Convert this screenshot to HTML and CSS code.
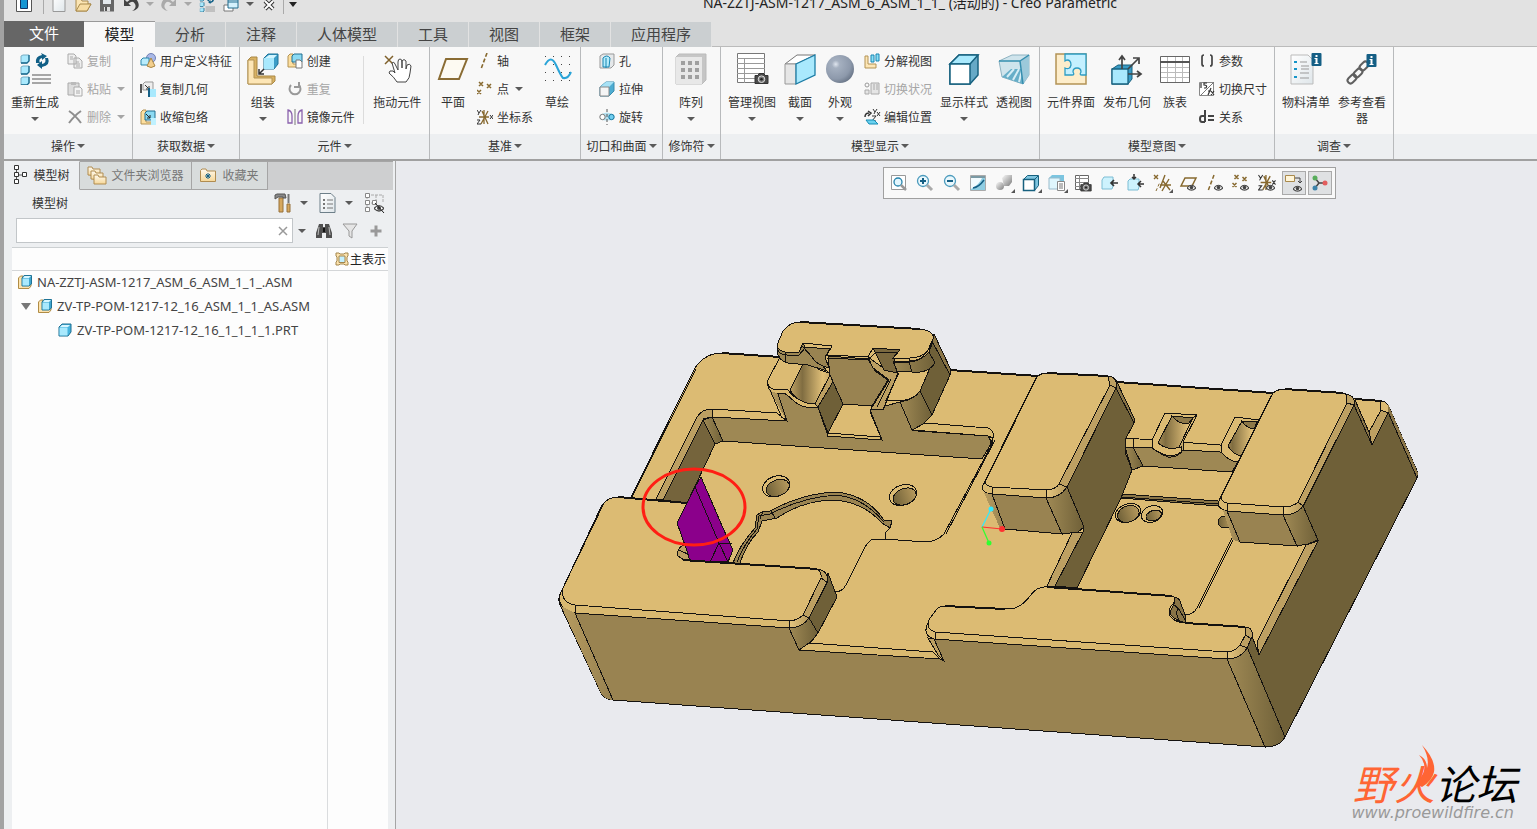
FILE: index.html
```html
<!DOCTYPE html>
<html lang="zh-CN">
<head>
<meta charset="utf-8">
<title>NA-ZZTJ-ASM-1217_ASM_6_ASM_1_1_ (活动的) - Creo Parametric</title>
<link rel="stylesheet" href="styles.css">
</head>
<body>
<svg class="defs" aria-hidden="true">
  <defs>
    <linearGradient id="page" x1="0" y1="0" x2="1" y2="1"><stop offset="0" stop-color="#fff"/><stop offset="1" stop-color="#dfe6ea"/></linearGradient>
    <linearGradient id="folder" x1="0" y1="0" x2="0" y2="1"><stop offset="0" stop-color="#fffaf0"/><stop offset="1" stop-color="#f6d797"/></linearGradient>
    <radialGradient id="ball" cx=".35" cy=".33" r=".7"><stop offset="0" stop-color="#dfe5ee"/><stop offset=".2" stop-color="#a5b0c0"/><stop offset=".75" stop-color="#8d99ab"/><stop offset="1" stop-color="#6e7a8c"/></radialGradient>
    <linearGradient id="gray" x1="0" y1="0" x2="1" y2="1"><stop offset="0" stop-color="#fafafa"/><stop offset="1" stop-color="#7c7c7c"/></linearGradient>
    <symbol id="asm" viewBox="0 0 16 16"><path d="M1.500 4l2-2H6v8h8v2l-2 2.500H1.500z" fill="#fde3ae" stroke="#b08c45"/><path d="M5 4l2-2.500h7.500V10L12 12H5z" fill="#3fa5cf" stroke="#1f7396"/><path d="M5.500 4.500H12v7H5.500z" fill="#a9e9fd"/><path d="M6 4l1.500-2H14l-2 2z" fill="#d7f6ff"/></symbol>
    <symbol id="prt" viewBox="0 0 16 16"><path d="M2 5l3-3h9v8l-3 4H2z" fill="#45b3dd" stroke="#1f6f91"/><path d="M2.500 5.500h8v8h-8z" fill="#a9e9fd"/><path d="M3 5l2-2h8l-2 2z" fill="#d7f6ff"/></symbol>
    <symbol id="eye" viewBox="0 0 10 7"><path d="M0 4q5-6 10 0q-5 5-10 0z" fill="#fff" stroke="#4a4a4a" stroke-width="1.200"/><circle cx="5" cy="3.600" r="2" fill="#444"/></symbol>
    <symbol id="camera" viewBox="0 0 15 12"><path d="M1 3h3l1-2h5l1 2h3v8H1z" fill="#4a4a4a" stroke="#333"/><circle cx="7.500" cy="6.700" r="3.300" fill="#777" stroke="#ddd"/><circle cx="7.500" cy="6.700" r="1.300" fill="#222"/></symbol>
    <symbol id="info" viewBox="0 0 10 13"><rect width="10" height="13" rx="1" fill="#155f85"/><path d="M4 2h2v2H4zM3 5h3v5h1v1H3v-1h1V6H3z" fill="#fff"/></symbol>
    <symbol id="triplet" viewBox="0 0 32 32"><g fill="#a9e9fd" stroke="#79aec4"><path d="M2 3l2-1h6v6l-2 2H2z"/><path d="M2 14l2-1h6v6l-2 2H2z"/><path d="M2 25l2-1h6v6l-2 2H2z"/></g><path d="M10 2v6l-2 2H2M10 13v6l-2 2H2M10 24v6l-2 2H2" fill="none" stroke="#186a8d" stroke-width="1.300"/><path d="M13 22h19M13 26h19M13 30h19" stroke="#8a8a8a" stroke-width="1.500"/><path d="M17 10q-1-7 6-8l-1-2l6 3l-5 4v-2q-4 1-2 5z" fill="#105f86"/><path d="M29 5q3 7-6 9v2l-5-4l5-4v3q5-1 3-6z" fill="#105f86"/></symbol>
    <symbol id="coords" viewBox="0 0 16 16"><path d="M2 8h10M5 2l6 13M11 2L4 15M7 1v14" stroke="#87692f" stroke-width="1.300"/><path d="M0 1l2 3l2-3M2 4l-1 2M0 11h3l-3 4h4M13 6l3 4M16 6l-3 4" fill="none" stroke="#333"/></symbol>
    <symbol id="axis" viewBox="0 0 16 16"><path d="M10 0L4 16" stroke="#87692f" stroke-width="1.600" stroke-dasharray="4 2"/></symbol>
    <symbol id="points" viewBox="0 0 16 16"><path d="M2 1l4 4M6 1L2 5M10 3l4 4M14 3l-4 4M0 9l4 4M4 9l-4 4" stroke="#87692f" stroke-width="1.500"/></symbol>
    <symbol id="puzzle" viewBox="0 0 32 32"><path d="M1 1h30v30H1z" fill="#fdedcb" stroke="#b39355" stroke-width="1.500"/><path d="M10 1h21v21h-4q-3 0-1-3q0-4-4-4t-4 4q2 3-1 3h-7v-7q5 2 6-3q0-5-4-5l-2 1z" fill="#c4f0ff" stroke="#2c9cc4" stroke-width="1.300"/></symbol>
    <symbol id="table" viewBox="0 0 32 32"><path d="M1.500 3.500h29v26h-29z" fill="#fff" stroke="#666"/><path d="M2 14.500h28M2 19.500h28M2 24.500h28M8.500 4v25M16.500 4v25M23.500 4v25" stroke="#bbb"/><path d="M1 9h30" stroke="#555" stroke-width="2"/></symbol>
  </defs>
</svg>

<div class="app">
<header class="titlebar">
  <nav class="quick" aria-label="快速访问工具栏">
    <button aria-label="窗口"><svg class="i16"><path d="M.5 0h15v15.500H.5z" fill="#fff" stroke="#555"/><path d="M4.500 2h7v10.500h-7z" fill="#1595d3" stroke="#136"/></svg></button>
    <i class="vr"></i>
    <button aria-label="新建" class="new"><svg class="i16"><path d="M2 0h12v15.500H2z" fill="url(#page)" stroke="#999"/></svg></button>
    <button aria-label="打开"><svg class="i16"><path d="M1 15V3h5l1 2h6v3h3l-4 7z" fill="#fbe5b4" stroke="#a98a4c"/><path d="M1 15L5 8h11l-4 7z" fill="#f7dda4" stroke="#a98a4c"/></svg></button>
    <button aria-label="保存"><svg class="i16"><path d="M1 0h14v15.500H1z" fill="#666"/><path d="M4 0h8v8H4z" fill="#e3e8ec"/><path d="M5 11h6v4.500H5z" fill="#ddd"/><path d="M6 11h2v4H6z" fill="#555"/></svg></button>
    <button aria-label="撤消"><svg class="i16"><path d="M1 3v7h7L5.500 7.500Q10 4 12 8t-3 7q9-2 6-9T4 6z" fill="#444"/></svg></button>
    <i class="caret pale"></i>
    <button aria-label="重做"><svg class="i16"><path d="M15 3v7H8l2.500-2.500Q6 4 4 8t3 7Q-2 13 1 6T12 6z" fill="#aaa"/></svg></button>
    <i class="caret pale"></i>
    <button aria-label="重新生成"><svg class="i16"><use href="#triplet"/></svg></button>
    <button aria-label="窗口列表"><svg class="i16"><path d="M1 9h9v6H1z" fill="#fff" stroke="#777"/><path d="M5 4h10v8H5z" fill="#d4f1fc" stroke="#226c8e"/><path d="M5 6h10" stroke="#226c8e"/></svg></button>
    <i class="caret"></i>
    <button aria-label="关闭"><svg class="i16"><path d="M4 5l8 8M12 5l-8 8" stroke="#333" stroke-width="4"/><path d="M4 5l8 8M12 5l-8 8" stroke="#fff" stroke-width="2"/></svg></button>
    <i class="vr end"></i>
    <i class="caret dark"></i>
  </nav>
  <h1>NA-ZZTJ-ASM-1217_ASM_6_ASM_1_1_ (活动的) - Creo Parametric</h1>
</header>

<nav class="tabs" aria-label="功能区">
  <button class="file">文件</button><button class="on">模型</button><button>分析</button><button>注释</button><button class="wide">人体模型</button><button>工具</button><button>视图</button><button>框架</button><button class="wide">应用程序</button>
  <i class="rule"></i>
</nav>

<section class="ribbon">
  <div class="group">
    <div class="body">
      <button class="big w62"><svg class="i32"><use href="#triplet"/></svg><span>重新生成</span><i class="caret"></i></button>
      <div class="col">
        <button class="small off"><svg class="i16"><path d="M1 1h6l2 2v8H1zM7 5h5l3 3v7H7z" fill="#eee" stroke="#aaa"/><path d="M3 4h3M3 6h3M9 9h3M9 11h4M9 13h4" stroke="#aaa"/></svg>复制</button>
        <button class="small off"><svg class="i16"><path d="M1 2h11v12H1z" fill="#ddd" stroke="#aaa"/><path d="M4 1h5v3H4z" fill="#bbb"/><path d="M7 6h6l2 2v7H7z" fill="#f5f5f5" stroke="#aaa"/><path d="M9 10h4M9 12h4" stroke="#aaa"/></svg>粘贴<i class="caret"></i></button>
        <button class="small off"><svg class="i16"><path d="M2 2q6 4 12 12M14 2Q8 6 2 14" fill="none" stroke="#8e8e8e" stroke-width="2"/></svg>删除<i class="caret"></i></button>
      </div>
    </div>
    <button class="foot">操作<i class="caret"></i></button>
  </div>
  <div class="group g2">
    <div class="body pad7">
      <div class="col">
        <button class="small"><svg class="i16"><circle cx="11" cy="5" r="4.500" fill="#a9b8e6" stroke="#7181b5"/><path d="M1 7l2-2h6v7H1z" fill="#b8ecfc" stroke="#2b86ab"/><path d="M11 5l4 8q-4 3-8 0z" fill="#f3cf8d" stroke="#a98745"/></svg>用户定义特征</button>
        <button class="small"><svg class="i16"><path d="M3 3l2-2h8v8H3z" fill="#eee" stroke="#999"/><path d="M1 3v9" stroke="#555" stroke-width="2"/><path d="M5 4l4 4M9 5v3H6" fill="none" stroke="#333"/><path d="M10 8h6v8h-6z" fill="#a9e9fd"/><path d="M9 7v9" stroke="#155f85" stroke-width="2"/></svg>复制几何</button>
        <button class="small"><svg class="i16"><path d="M1 3l2-2h3v12h9v2H1z" fill="#fddf9f" stroke="#b39355"/><path d="M5 4l2-2h8v9H5z" fill="#8bdaf3" stroke="#216f91"/><path d="M6 5l4 4M10 6v3H7" fill="none" stroke="#222"/><path d="M11 9h5v7h-5z" fill="#bff1ff"/></svg>收缩包络</button>
      </div>
    </div>
    <button class="foot">获取数据<i class="caret"></i></button>
  </div>
  <div class="group g3">
    <div class="body">
      <button class="big w46"><svg class="i32"><path d="M1 7l3-3h6v19h18v5l-3 3H1z" fill="#d9b263" stroke="#a98745"/><path d="M1 7h6v18h18v6H1z" fill="#fde6b6" stroke="#b39355"/><path d="M17 5l4-4h10v10l-4 5H17z" fill="#3c9dc7" stroke="#1d7297"/><path d="M17 5h10v11H17z" fill="#a9e9fd"/><path d="M18 5l4-3h8l-3 3z" fill="#d2f5ff"/><path d="M17 16l-5 5M12 16v5h5" fill="none" stroke="#333" stroke-width="1.500"/></svg><span>组装</span><i class="caret"></i></button>
      <div class="col line">
        <button class="small"><svg class="i16"><path d="M1 3l2-2h3v10h6v3H1z" fill="#fddf9f" stroke="#b39355"/><path d="M5 3l2-2h8v8H5z" fill="#8bdaf3" stroke="#216f91"/><path d="M9 7h4l2 2v6H9z" fill="#fff" stroke="#777"/></svg>创建</button>
        <button class="small off"><svg class="i16"><path d="M4 4a5.500 5.500 0 1 0 8 0M12 1v5h-5" fill="none" stroke="#999" stroke-width="2"/></svg>重复</button>
        <button class="small"><svg class="i16"><path d="M1 1q4 1 4 6v7H1zM15 1q-4 1-4 6v7h4z" fill="none" stroke="#8a62ad" stroke-width="1.300"/><path d="M8 0v16" stroke="#777"/></svg>镜像元件</button>
      </div>
      <button class="big w64"><svg class="i32"><path d="M4 3l8 8M12 3l-8 8" stroke="#7f602b" stroke-width="1.500"/><path d="M11 10q2-2 3 1l3 6V9q0-3 2-3t2 3v6V8q2-3 4 0v8l1-4q3-2 4 1l-1 7q0 5-4 9H16q-3-5-8-9q0-3 4-2l2 2z" fill="#fff" stroke="#444"/></svg><span>拖动元件</span></button>
    </div>
    <button class="foot">元件<i class="caret"></i></button>
  </div>
  <div class="group g4">
    <div class="body">
      <button class="big w46"><svg class="i32"><path d="M9 6h21l-8 20H2z" fill="#fdfaf2" stroke="#8a6c34" stroke-width="2"/></svg><span>平面</span></button>
      <div class="col w58">
        <button class="small"><svg class="i16"><use href="#axis"/></svg>轴</button>
        <button class="small"><svg class="i16"><use href="#points"/></svg>点<i class="caret"></i></button>
        <button class="small"><svg class="i16"><use href="#coords"/></svg>坐标系</button>
      </div>
      <button class="big w46"><svg class="i32"><path d="M4 3.500h26M4 11.500h26M4 19.500h26M4 27.500h26" stroke="#444" stroke-dasharray="1 7"/><path d="M4 12q6-11 11 0t7 13q5 1 8-6" fill="none" stroke="#2aa4d8" stroke-width="2"/></svg><span>草绘</span></button>
    </div>
    <button class="foot">基准<i class="caret"></i></button>
  </div>
  <div class="group g5">
    <div class="body pad18">
      <div class="col">
        <button class="small"><svg class="i16"><path d="M1 3l3-2h11v11l-3 3H1z" fill="#e5e8ea" stroke="#999"/><path d="M4 14V5q4-4 7 0l-1 9z" fill="#b5ecfb" stroke="#1685b2"/><path d="M7 5v10" stroke="#1685b2"/></svg>孔</button>
        <button class="small"><svg class="i16"><path d="M1 6l6-5h8v9l-5 5H1z" fill="#4eacd1" stroke="#3b8dae"/><path d="M1 6l6-5h8l-5 5z" fill="#a7e1f5"/><path d="M1 6h9v9H1z" fill="#f5f5f5" stroke="#888"/></svg>拉伸</button>
        <button class="small"><svg class="i16"><path d="M1 6q7-5 14 0v4q-7 3-14 0z" fill="#b5e0ef"/><circle cx="3.500" cy="8" r="2.700" fill="#fff" stroke="#777"/><circle cx="12.500" cy="8" r="2.700" fill="#70cef0" stroke="#16769d"/><path d="M8 0v16" stroke="#555" stroke-dasharray="3 2"/></svg>旋转</button>
      </div>
    </div>
    <button class="foot">切口和曲面<i class="caret"></i></button>
  </div>
  <div class="group g6">
    <div class="body">
      <button class="big w56"><svg class="i32"><path d="M1 4l3-3h27v26l-4 4H1z" fill="#c6c6c6" stroke="#bbb"/><path d="M1 4h26v27H1z" fill="#e8e8e8"/><path d="M6 10h18M6 17h18M6 24h18" stroke="#a0a0a0" stroke-width="4" stroke-dasharray="4 3"/></svg><span>阵列</span><i class="caret"></i></button>
    </div>
    <button class="foot">修饰符<i class="caret"></i></button>
  </div>
  <div class="group g7">
    <div class="body">
      <button class="big w62"><svg class="i32"><path d="M1.500.5h27v29h-27z" fill="#fff" stroke="#777"/><path d="M1 5.500h28M1 10.500h28M1 15.500h28M1 20.500h28M1 25.500h28M8.500 6v24" stroke="#999"/><use href="#camera" x="18" y="19" width="15" height="13"/></svg><span>管理视图</span><i class="caret"></i></button>
      <button class="big w34"><svg class="i32"><path d="M1 11l12-9h18L12 11z" fill="#fff" stroke="#777"/><path d="M1 11h11v20H1z" fill="#e6e6e6" stroke="#999"/><path d="M12 11l19-9v20l-19 9z" fill="#a9e9fd" stroke="#1d7da6" stroke-width="1.300"/></svg><span>截面</span><i class="caret"></i></button>
      <button class="big w46"><svg class="i32"><circle cx="16" cy="16" r="14" fill="url(#ball)"/></svg><span>外观</span><i class="caret"></i></button>
      <div class="col w73">
        <button class="small"><svg class="i16"><path d="M1 3h3v8h8v4H1z" fill="#fde6b6" stroke="#b39355"/><path d="M7 2h3v7H7zM12 1h3v7h-3z" fill="#8ae0f7" stroke="#1685b2"/></svg>分解视图</button>
        <button class="small off"><svg class="i16"><circle cx="3" cy="4" r="2" fill="none" stroke="#999"/><path d="M1 9h4v4H1zM7 2h8v11H7zM10 3v6M13 3v6" fill="#e5e5e5" stroke="#aaa"/></svg>切换状况</button>
        <button class="small"><svg class="i16"><path d="M1 8q0-4 4-4M4 2l3 2l-3 3" fill="none" stroke="#333" stroke-width="1.500"/><path d="M9 0l2 3l2-3M11 3l-1 2M8 7h4l-4 5h4M13 3l3 4M16 3l-3 4" fill="none" stroke="#333"/><path d="M2 11h8l4 4H5z" fill="#6bd2ef" stroke="#168cb5"/></svg>编辑位置</button>
      </div>
      <button class="big w56"><svg class="i32"><path d="M2 11l9-9h19v20l-8 9H2z" fill="#66a9c6" stroke="#17617f" stroke-width="1.500"/><path d="M2 11l9-9h19l-8 9z" fill="#a9e9fd" stroke="#17617f" stroke-width="1.500"/><path d="M2 11h20v20H2z" fill="#fff" stroke="#17617f" stroke-width="1.500"/></svg><span>显示样式</span><i class="caret"></i></button>
      <button class="big w44"><svg class="i32"><path d="M1 8l13-6h17v20l-6 9L4 24z" fill="#cfe4ec" stroke="#8eb3c2"/><path d="M4 24l9-8h15l-3 15z" fill="#66aec8"/><path d="M9 24l7-8M15 27l6-11M21 29l3-12" stroke="#d5edf5" stroke-width="2"/><path d="M22 8l9-6v20l-6 9z" fill="#9cc9da"/><path d="M1 8h21l3 23M22 8l9-6" fill="none" stroke="#368eaf" stroke-width="1.500"/></svg><span>透视图</span></button>
    </div>
    <button class="foot">模型显示<i class="caret"></i></button>
  </div>
  <div class="group g8">
    <div class="body">
      <button class="big w62"><svg class="i32"><use href="#puzzle"/></svg><span>元件界面</span></button>
      <button class="big w50"><svg class="i32"><path d="M1 16l6-4h14v14l-4 5H1z" fill="#399bc5" stroke="#17617f"/><path d="M1 16h16v15H1z" fill="#a9e9fd" stroke="#17617f" stroke-width="1.300"/><path d="M11 16V4M8 7l3-4l3 4M17 16L27 6M22 5h6v6M17 21h12M26 18l4 3l-4 3" fill="none" stroke="#444" stroke-width="1.700"/></svg><span>发布几何</span></button>
      <button class="big w46"><svg class="i32"><use href="#table"/></svg><span>族表</span></button>
      <div class="col">
        <button class="small"><svg class="i16"><path d="M5 2q-2 0-2 2v7q0 2 2 2M11 2q2 0 2 2v7q0 2-2 2" fill="none" stroke="#444" stroke-width="1.700"/></svg>参数</button>
        <button class="small"><svg class="i16"><path d="M.5 1.500h14v13H.5z" fill="#fff" stroke="#888"/><path d="M15 1L1 15" stroke="#777"/><path d="M2 2v5M8 2H5v2q4 0 2 3H5M9 14l3-7M9 10h3M12 10l3 4M15 10l-3 4" fill="none" stroke="#333" stroke-width="1.200"/></svg>切换尺寸</button>
        <button class="small"><svg class="i16"><path d="M6 1v12M6 7H3q-2 0-2 3t2 3h3M9 7h6M9 11h6" fill="none" stroke="#444" stroke-width="2"/></svg>关系</button>
      </div>
    </div>
    <button class="foot">模型意图<i class="caret"></i></button>
  </div>
  <div class="group g9">
    <div class="body">
      <button class="big w62"><svg class="i32"><path d="M1 2h17l5 5v24H1z" fill="url(#page)" stroke="#bbb"/><path d="M4 9h3M4 16h3M4 24h3" stroke="#1595c9" stroke-width="2"/><path d="M10 9h7M11 13h8M11 16h8M10 20h9M10 25h9" stroke="#999"/><use href="#info" x="21" y="0" width="11" height="13"/></svg><span>物料清单</span></button>
      <button class="big w50"><svg class="i32"><g fill="none" stroke="#606060" stroke-width="2"><rect x="-5" y="-3" width="10" height="6" rx="3" transform="translate(6 26)rotate(-45)"/><rect x="-5" y="-3" width="10" height="6" rx="3" transform="translate(12 20)rotate(-45)"/><rect x="-5" y="-3" width="10" height="6" rx="3" transform="translate(18 13)rotate(-45)"/></g><use href="#info" x="20" y="1" width="11" height="13"/></svg><span>参考查看器</span></button>
    </div>
    <button class="foot">调查<i class="caret"></i></button>
  </div>
  <div class="rest"><div class="body"></div><div class="foot"></div></div>
</section>

<main class="work">
  <aside class="side">
    <nav class="sidetabs" aria-label="导航器">
      <button class="on"><svg class="i16"><path d="M3.500 3v10M3.500 8h7" stroke="#555"/><path d="M1.500-1.500h4v4h-4zM1.500 5.500h4v4h-4zM1.500 12.500h4v4h-4zM9.500 5.500h4v4h-4z" fill="#fff" stroke="#333"/></svg>模型树</button>
      <button class="mid"><svg class="i20"><path d="M1 10V2h4l1 2h7v7z" fill="url(#folder)" stroke="#b08c50"/><path d="M4 14V6h4l1 2h7v7z" fill="url(#folder)" stroke="#b08c50"/><path d="M7 10h4l1 2h7v7H7z" fill="url(#folder)" stroke="#b08c50"/></svg>文件夹浏览器</button>
      <button class="fav"><svg class="i16"><path d="M.5 14.500v-11L2 2h4l1 2h8.500v10.500z" fill="url(#folder)" stroke="#b08c50"/><path d="M8 6v6M5 9h6M6 7l4 4M10 7l-4 4" stroke="#126086"/></svg>收藏夹</button>
      <i class="fill"></i>
    </nav>
    <div class="panel">
      <div class="treehead">
        <h2>模型树</h2>
        <button aria-label="设置" class="tool"><svg class="i20"><path d="M5 5h4v14H5z" fill="#d6a75d" stroke="#96703a"/><path d="M1 2l2-1h8l1 4H9V4H4L1 6z" fill="#888" stroke="#555"/><path d="M14.500 1v9" stroke="#777" stroke-width="2"/><path d="M13 11h3v8h-3z" fill="#d6a75d" stroke="#96703a"/></svg><i class="caret"></i></button>
        <button aria-label="显示" class="tool"><svg class="i20"><path d="M1 .5h11l4 4v15H1z" fill="url(#page)" stroke="#6d7f89"/><path d="M8 7h6M8 11h6M8 15h6" stroke="#777"/><path d="M5 6v11" stroke="#777" stroke-width="2" stroke-dasharray="2 2"/></svg><i class="caret"></i></button>
        <button aria-label="层树"><svg class="i20"><path d="M3 3v14M3 10h8M7 2h12v8M12 2v8" fill="none" stroke="#aaa" stroke-dasharray="3 1"/><path d="M1.500.5h4v4h-4zM1.500 7.500h4v4h-4zM1.500 14.500h4v4h-4zM8.500 7.500h4v4h-4z" fill="#fff" stroke="#888"/><use href="#eye" x="10" y="11" width="10" height="8"/><path d="M11 10l9 10" stroke="#222"/></svg></button>
      </div>
      <div class="search">
        <div class="box"><input type="text" aria-label="搜索模型树"><button aria-label="清除"><svg class="i10"><path d="M1 1l8 8M9 1L1 9" stroke="#999" stroke-width="1.500"/></svg></button></div>
        <i class="caret"></i>
        <button aria-label="查找"><svg class="i16"><path d="M3 1h4v3h2V1h4l3 9v5h-6v-5H6v5H0v-5z" fill="#505050"/><path d="M3 4L2 12M13 4l1 8" stroke="#bbb"/><path d="M7 5h2v4H7z" fill="#111"/></svg></button>
        <button aria-label="过滤"><svg class="i16"><path d="M1 1h14L10 8v7l-3-2V8z" fill="#e5e5e5" stroke="#999"/></svg></button>
        <button aria-label="添加"><svg class="i16"><path d="M8 2.500v11M2.500 8h11" stroke="#999" stroke-width="3"/></svg></button>
      </div>
      <div class="tree">
        <div class="names">
          <div class="colhead"></div>
          <ul>
            <li><svg class="i16"><use href="#asm"/></svg>NA-ZZTJ-ASM-1217_ASM_6_ASM_1_1_.ASM</li>
            <li><button aria-label="折叠" class="twist"></button><svg class="i16"><use href="#asm"/></svg>ZV-TP-POM-1217-12_16_ASM_1_1_AS.ASM</li>
            <li class="deep"><svg class="i16"><use href="#prt"/></svg>ZV-TP-POM-1217-12_16_1_1_1_1.PRT</li>
          </ul>
        </div>
        <div class="rep"><div class="colhead"><svg class="i14"><path d="M1 1h3l1 1h4l1-1h3v3l-1 1v4l1 1v3h-3l-1-1H5l-1 1H1v-3l1-1V5L1 4z" fill="#fde3ae" stroke="#a3864d"/><path d="M4 4h6v6.500H4z" fill="#c4f0ff" stroke="#a3864d"/></svg>主表示</div></div>
      </div>
    </div>
  </aside>

  <section class="canvas">
    <svg class="model" viewBox="396 161 1141 668" role="img" aria-label="三维模型">
      <defs>
        <linearGradient id="cr"><stop offset="0" stop-color="#a08a55"/><stop offset="1" stop-color="#6f6038"/></linearGradient>
        <linearGradient id="cl"><stop offset="0" stop-color="#b79c60"/><stop offset="1" stop-color="#978150"/></linearGradient>
        <linearGradient id="gv"><stop offset="0" stop-color="#c0a263"/><stop offset=".3" stop-color="#806d41"/><stop offset=".8" stop-color="#e0bf78"/><stop offset="1" stop-color="#c5a666"/></linearGradient>
        <linearGradient id="bc"><stop offset="0" stop-color="#e6c781"/><stop offset="1" stop-color="#b6995c"/></linearGradient>
        <linearGradient id="hole"><stop offset="0" stop-color="#6f6038"/><stop offset="1" stop-color="#b79a5d"/></linearGradient>
      </defs>
      <g class="edges">
        <path class="top" d="M631 497L695 368Q705 353 722 353L780 357L950 370L1038 376L1117 382L1273 393L1355 399L1382 401Q1387 402 1389 407L1418 473L1417 478L1285 737Q1280 747 1265 747L613 700Q604 699 601 693L560 605Q557 597 562 590L602 505Q608 497 618 497z"/>
        <path class="ln" d="M632 497L696 369M562 590L604 503"/>
        <!-- left pocket -->
        <path class="mid" d="M656 499L697 417Q702 409 712 409L777 413L787 421L712 417L703 420L663 500z"/>
        <path class="wall" d="M703 419L712 417L787 421L770 388L818 407L828 436L882 440L870 410L900 402L912 430L918 431L988 436L992 442L982 459L723 441L715 444z"/>
        <path fill="url(#cr)" d="M703 420L712 417L723 441L715 444z"/>
        <path fill="#75643c" d="M663 500L703 420L715 444L687 503z"/>
        <path class="lite" d="M925 423L988 428Q995 431 993 438L988 436L912 430z"/>
        <path class="top" d="M712 409L777 413L787 421L712 417z"/>
        <path class="ln" d="M993 438L992 444L944 534Q936 542 925 542L885 539H873Q868 541 864 549L846 585Q842 592 835 592M995 440L946 534M989 436L991 444M885 539L885 533L891 527"/>
        <path fill="#9b8451" d="M733 563Q739 546 755 528L757 515Q761 511 770 511Q803 493 837 492Q868 496 884 520L892 521L890 528L882 523Q861 500 830 500Q800 502 777 518L762 521L758 532Q746 544 740 563z"/>
        <path class="ln" d="M737 562Q744 544 757 529L759 516L770 514Q803 497 837 495Q864 498 884 522M763 511L760 519M771 511L775 518"/>
        <g transform="rotate(-20 777 486)"><ellipse class="top" cx="776" cy="486" rx="14" ry="10"/><ellipse fill="url(#hole)" cx="777" cy="488" rx="12" ry="8"/></g>
        <g transform="rotate(-20 903 495)"><ellipse class="top" cx="903" cy="495" rx="14" ry="10"/><ellipse fill="url(#hole)" cx="904" cy="497" rx="12" ry="8"/></g>
        <!-- raised clamp -->
        <path class="top" d="M780 357L768 380Q766 386 773 390L788 390L797 397Q806 406 818 407L832 375L843 404L872 406L870 410L883 409L887 400H905Q916 398 921 390L935 360L932 334L800 330z"/>
        <path class="lite" d="M768 381Q767 387 773 389L788 390Q798 404 818 403L818 407Q803 409 795 402L786 394L773 393Q766 388 768 381z"/>
        <path fill="url(#cl)" d="M769 390L778 394L787 421z" stroke="none"/>
        <path class="ln" d="M778 394L787 421M770 390L782 418"/>
        <path fill="url(#gv)" d="M804 362L790 390Q798 404 816 404L831 373Q815 371 813 361z"/>
        <path class="mid" d="M831 373L815 404L818 407L835 381z"/>
        <path fill="#6f6038" d="M834 380L843 404L828 433L818 407z"/>
        <path fill="#998351" d="M828 356L868 359L875 371L888 380L872 406L843 404L830 375z"/>
        <path class="top" d="M843 404L872 406L870 412L882 440L827 436L828 433z"/>
        <path class="lite" d="M828 433L880 437L882 440L827 436z"/>
        <path class="mid" d="M868 357L873 368L889 380L871 409L883 410L887 400L898 373L886 370z"/>
        <path class="ln" d="M891 379L877 407M899 373L886 400H903M900 402L912 430"/>
        <path fill="#7b693f" d="M873 348L900 350L894 360L897 373L884 370L876 354z"/>
        <path fill="url(#cr)" d="M900 402Q914 400 920 391L932 415L923 424L912 430z"/>
        <path fill="#6f6038" d="M933 341L950 375L932 415L920 391L930 368L935 363L929 352z"/>
        <path fill="#8a7547" d="M934 334L951 370L950 375L932 341z"/>
        <path fill="url(#cr)" d="M893 361H909Q922 361 929 352L935 363Q928 374 912 372L897 371z"/>
        <path class="wall" d="M777 346L785 352H799L803 343L806 349L818 360L827 371L808 365L788 363Q779 361 777 352z"/>
        <path fill="#998351" d="M803 347L830 349L825 357L829 368Q816 365 812 357z"/>
        <path class="top" d="M777 345L783 331Q790 322 800 322L920 329Q935 331 933 339L928 350Q922 358 910 358H893L900 350L873 348L868 357L827 355L832 346L803 343L799 352H785Q777 350 777 345z"/>
        <path class="ln" d="M777 347Q778 355 787 355L798 356L806 347M785 352V362M827 358L868 360L876 352L897 353M893 362H910Q924 361 932 343M909 358V362L912 372"/>
        <!-- purple insert -->
        <path class="mid" d="M688 543Q676 547 678 556L684 560L692 561z"/><path class="ln" d="M679 550L692 556"/>
        <path fill="#8b008b" d="M701 477L723 528L733 550L728 562L690 561L686 548L677 523L695 487z"/>
        <path class="ln" d="M695 487L719 543L728 562M732 543H719L710 562"/>
        <!-- lower left block -->
        <path class="ln heavy" d="M618 497L687 503M683 560L817 569"/>
        <path class="lite" d="M562 590Q562 603 575 605L790 621L789 628L575 613Q559 609 559 597z"/>
        <path fill="url(#bc)" d="M790 621Q798 620 803 615L809 618Q801 629 789 628z"/>
        <path class="mid" d="M803 615L821 578Q822 572 817 569Q827 570 828 580L809 618z"/>
        <path fill="#6f6038" d="M828 573L837 597L818 633L809 618L827 583z"/>
        <path class="ln" d="M821 578L828 583"/>
        <path fill="url(#cr)" d="M789 628Q802 628 809 618L818 633Q808 647 799 650z"/>
        <path class="lite" d="M809 643L933 652L940 659L799 650z"/>
        <path fill="#998351" d="M575 613L789 628L799 650L940 659L944 661L934 639L1227 659L1265 747L613 700z"/>
        <path fill="url(#cl)" d="M561 606L575 613L613 700Q604 699 601 693z" stroke="none"/>
        <path class="ln" d="M575 605V613L613 700"/>
        <!-- right face -->
        <path fill="#6f6038" d="M1247 647L1252 636L1259 655L1318 541L1303 507L1354 405L1372 445L1388 412L1417 478L1285 737z"/>
        <path fill="#8a7547" d="M1388 404L1418 473L1417 478L1388 412z" stroke="none"/>
        <path class="mid" d="M1381 410L1388 413L1372 445L1369 432z"/><path fill="#8a7547" d="M1355 400L1369 432L1372 445L1354 405z"/>
        <path class="ln" d="M1381 410L1380 401M1388 412L1417 478"/>
        <path class="mid" d="M1257 642L1306 545L1318 541L1259 655z"/>
        <path fill="url(#cr)" d="M1227 659Q1241 658 1247 647L1285 737Q1280 747 1265 747z"/>
        <!-- right pocket -->
        <path class="lite" d="M1126 438L1220 445L1238 462L1133 451L1125 447z"/>
        <path class="wall" d="M1125 447H1133L1152 448L1163 455H1178L1183 450L1220 452L1238 462L1232 472L1143 466Q1135 466 1132 470L1125 452z"/>
        <path fill="url(#cr)" d="M1125 447L1133 447L1143 466L1132 470z"/>
        <path fill="url(#gv)" d="M1165 413L1197 415L1183 442V450Q1178 458 1168 457L1152 448V440z"/>
        <path class="top" d="M1165 413L1197 415L1193 418L1172 416L1158 443Q1167 451 1181 447V452Q1170 461 1152 448V440z"/>
        <path fill="#8d7849" d="M1172 416L1193 418L1188 424Q1178 424 1172 416z"/>
        <path class="ln" d="M1193 418L1179 447M1133 439V447M1183 443V450"/>
        <path fill="url(#gv)" d="M1235 417L1259 420L1238 462Q1228 461 1221 452V445z"/>
        <path class="top" d="M1235 417L1259 420L1257 422L1242 421L1228 446Q1232 454 1241 456L1238 462Q1228 461 1221 452V445z"/>
        <path fill="#8d7849" d="M1242 421L1257 422L1254 429Q1246 428 1242 421z"/>
        <path fill="#8a7547" d="M1122 494L1218 501V506L1121 498z"/><path class="ln" d="M1121 497L1218 504M1132 470L1121 497"/>
        <path class="ln" d="M1232 538L1197 608Q1193 615 1185 615M1234 538L1199 608"/>
        <g transform="rotate(-20 1128 513)"><ellipse class="top" cx="1128" cy="513" rx="13" ry="9"/><ellipse fill="url(#hole)" cx="1128" cy="514" rx="11" ry="8"/></g>
        <g transform="rotate(-20 1152 514)"><ellipse class="top" cx="1152" cy="514" rx="11" ry="8"/><ellipse fill="url(#hole)" cx="1153" cy="516" rx="8" ry="5"/></g>
        <ellipse fill="url(#hole)" cx="1225" cy="522" rx="7" ry="6"/>
        <!-- middle block -->
        <path fill="#6f6038" d="M1067 487L1116 388L1134 423L1125 440V452L1132 470L1121 498L1077 588L1055 586L1083 532L1084 527z"/>
        <path fill="#8a7547" d="M1116 380L1135 420L1134 423L1116 388z"/>
        <path class="mid" d="M1072 533L1083 532L1055 586L1047 586z"/>
        <path class="top" d="M985 482L1037 377Q1041 373 1047 373L1108 376Q1116 378 1110 385L1059 484Q1055 490 1047 490L992 487Q986 486 985 482z"/>
        <path class="lite" d="M985 482Q986 486 992 487L1047 490L1046 498L992 494Q982 493 982 487z"/>
        <path fill="url(#bc)" d="M1047 490Q1056 489 1059 484L1067 487Q1060 498 1046 498z"/>
        <path class="mid" d="M1059 484L1110 385L1108 376Q1118 377 1116 388L1067 487z"/><path class="ln" d="M1110 385L1116 388M982 487L1036 378M992 487V494"/>
        <path fill="url(#cl)" d="M984 493L992 494L1005 529L1000 528z" stroke="none"/>
        <path fill="#998351" d="M992 494L1046 498L1062 534L1005 529z"/>
        <path fill="url(#cr)" d="M1046 498Q1060 498 1067 487L1084 527L1078 532L1062 534z"/>
        <!-- right block -->
        <path class="top" d="M1221 496L1273 393Q1278 389 1285 389L1343 393Q1350 396 1347 403L1298 502Q1293 507 1283 507L1227 503Q1221 502 1221 496z"/>
        <path class="lite" d="M1221 496Q1221 502 1227 503L1283 507V515L1227 511Q1218 509 1218 503z"/>
        <path fill="url(#bc)" d="M1283 507Q1293 507 1298 502L1303 506Q1297 516 1283 515z"/>
        <path class="mid" d="M1298 502L1347 403L1346 394Q1356 396 1354 405L1303 506z"/><path class="ln" d="M1347 403L1354 405M1218 503L1271 396M1227 503V511"/>
        <path fill="url(#cl)" d="M1223 510L1227 511L1240 542L1233 540z" stroke="none"/>
        <path fill="#998351" d="M1227 511L1283 515L1297 546L1240 542z"/>
        <path fill="url(#cr)" d="M1283 515Q1297 515 1303 506L1318 540L1308 544L1297 546z"/>
        <!-- lower right block -->
        <path class="top" d="M935 632Q924 628 930 618L937 609Q940 606 945 606L1010 609Q1021 608 1030 596Q1037 586 1047 587L1172 596Q1178 598 1173 604Q1167 610 1170 616Q1174 622 1185 623L1245 627Q1250 631 1245 636L1240 646Q1236 651 1227 652z"/>
        <path class="lite" d="M929 621Q926 629 935 632L1227 652V659L934 639Q921 635 929 621z"/>
        <path fill="url(#bc)" d="M1227 652Q1236 651 1240 645L1247 648Q1241 659 1227 659z"/>
        <path class="mid" d="M1245 627Q1254 628 1252 637L1247 648L1240 645L1246 634z"/><path class="ln" d="M1245 635L1252 639"/>
        <path fill="#8a7547" d="M1174 597Q1180 598 1181 604L1186 617L1185 623Q1170 618 1170 612L1174 604z"/><path class="ln" d="M1174 605L1178 608L1186 621M1178 608Q1175 614 1180 622"/>
        <path class="mid" d="M928 638L934 639L944 661L938 655z"/>
        <path class="ln heavy" d="M945 606L1005 609M1047 587L1172 596M1185 623L1245 627M1047 373L1108 376M1285 389L1343 393M800 322L920 329M722 353L780 357M950 370L1038 376M1117 382L1273 393M1355 399L1382 401"/>
        <path class="ln" d="M935 632V639"/>
      </g>
      <ellipse cx="694" cy="507" rx="51" ry="38" fill="none" stroke="#ff1e14" stroke-width="3"/>
      <g stroke-width="1.200"><path d="M982 527L991 509" stroke="#30eaff"/><path d="M982 527L1002 529" stroke="#ff3030"/><path d="M982 527L989 543" stroke="#30ff30"/></g>
      <circle cx="991" cy="509" r="2.500" fill="#30eaff"/><circle cx="1002" cy="529" r="3" fill="#ff3030"/><circle cx="989" cy="543" r="2.500" fill="#30ff30"/>
    </svg>

    <div class="viewbar" role="toolbar" aria-label="视图">
      <button aria-label="重新调整"><svg class="i18"><path d="M1.500 1.500h14v14h-14z" fill="#fff" stroke="#999"/><circle cx="8" cy="8" r="4" fill="#e4f6fd" stroke="#2683ab" stroke-width="1.300"/><path d="M11 11l5 5" stroke="#999" stroke-width="2.500"/></svg></button>
      <button aria-label="放大"><svg class="i18"><circle cx="7" cy="7" r="5.500" fill="#eaf8fd" stroke="#4c9bbd" stroke-width="1.300"/><path d="M4 7h6M7 4v6" stroke="#155f85" stroke-width="2"/><path d="M11 11l5 5" stroke="#aaa" stroke-width="3"/></svg></button>
      <button aria-label="缩小"><svg class="i18"><circle cx="7" cy="7" r="5.500" fill="#eaf8fd" stroke="#4c9bbd" stroke-width="1.300"/><path d="M4 7h6" stroke="#155f85" stroke-width="2"/><path d="M11 11l5 5" stroke="#aaa" stroke-width="3"/></svg></button>
      <button aria-label="重画"><svg class="i18"><path d="M1.500 1.500h15v15h-15z" fill="#8fcde2" stroke="#aaa"/><path d="M2 4h11Q10 11 2 15z" fill="#f3fbfe"/><path d="M2 3h14" stroke="#666" stroke-width="1"/><path d="M4 14q6-1 11-8" fill="none" stroke="#155f85" stroke-width="1.500"/></svg></button>
      <button aria-label="着色" class="more"><svg class="i18"><circle cx="5" cy="12" r="4" fill="url(#gray)"/><path d="M7 4l3-3h7v7l-3 4H9z" fill="url(#gray)"/></svg></button>
      <button aria-label="显示样式" class="more"><svg class="i18"><path d="M1.500 5.500l4-4h11v10l-4 5h-11z" fill="#7fc5df" stroke="#17617f"/><path d="M1.500 5.500h11v11h-11z" fill="#fff" stroke="#17617f" stroke-width="1.500"/><path d="M12 6l4-4" stroke="#17617f"/></svg></button>
      <button aria-label="已保存方向" class="more"><svg class="i18"><path d="M1 4l3-3h12v11H1z" fill="#7cc5e0"/><path d="M1 4h11v11H1z" fill="#dff6fd" stroke="#9bc"/><path d="M9.500 7.500h7v9h-7z" fill="#fff" stroke="#888"/><path d="M11 10h4M11 12h4M11 14h4" stroke="#777"/></svg></button>
      <button aria-label="视图管理器"><svg class="i18"><path d="M1.500 1.500h13v14h-13z" fill="#fff" stroke="#666"/><path d="M1 4.500h14M1 8.500h14M1 12.500h14M5.500 1v14" stroke="#888"/><use href="#camera" x="6" y="8" width="12" height="10"/></svg></button>
      <button aria-label="激活"><svg class="i18"><path d="M1 6l2-3h9v9l-1 3H1z" fill="#cdf2fd" stroke="#7dbdd4"/><path d="M17 9h-6M13 6l-3 3l3 3" fill="none" stroke="#333" stroke-width="1.700"/></svg></button>
      <button aria-label="拖动"><svg class="i18"><path d="M1 7l2-2h9v8l-1 3H1z" fill="#cdf2fd" stroke="#7dbdd4"/><path d="M17 10h-6M14 7l-3 3l3 3M7 0v5M5 3l2 2l2-2" fill="none" stroke="#333" stroke-width="1.500"/></svg></button>
      <button aria-label="基准过滤" class="more"><svg class="i18"><path d="M1 1l4 4M5 1L1 5M7 14L12 1M7 11h11M9 17l7-12M10 7l7 9" stroke="#87692f" stroke-width="1.400"/><path d="M3 17l4-9" stroke="#87692f" stroke-dasharray="3 2"/></svg></button>
      <button aria-label="平面显示"><svg class="i18"><path d="M6 4h11l-4 8H2z" fill="none" stroke="#87692f" stroke-width="1.500"/><use href="#eye" x="8" y="10" width="9" height="7"/></svg></button>
      <button aria-label="轴显示"><svg class="i18"><path d="M8 1L2 17" stroke="#87692f" stroke-width="1.500" stroke-dasharray="4 2"/><use href="#eye" x="8" y="10" width="9" height="7"/></svg></button>
      <button aria-label="点显示"><svg class="i18"><use href="#points" width="17" height="16"/><use href="#eye" x="8" y="10" width="9" height="7"/></svg></button>
      <button aria-label="坐标系显示"><svg class="i18"><use href="#coords" width="18" height="17"/><use href="#eye" x="8" y="10" width="9" height="7"/></svg></button>
      <button aria-label="注释显示" class="down"><svg class="i18"><path d="M.5 1.500h9v6h-9z" fill="#fff5d8" stroke="#a98a4c"/><path d="M10 4h5v5M13 7l2 2l2-2" fill="none" stroke="#444"/><use href="#eye" x="8" y="11" width="9" height="7"/></svg></button>
      <button aria-label="旋转中心" class="down"><svg class="i18"><path d="M4 4l4 5h6M8 9l-4 5" fill="none" stroke="#444" stroke-width="1.500"/><circle cx="4" cy="4" r="2.500" fill="#58ad5b"/><circle cx="14" cy="9" r="2.500" fill="#e35e5e"/><circle cx="4" cy="14" r="2.500" fill="#3d83aa"/></svg></button>
    </div>

    <div class="brand">
      <svg class="flame" viewBox="0 0 18 42"><path d="M5 0Q19 15 17 27Q15 36 5 42Q0 40 1 35Q9 28 7 19Q6 14 2 10Q10 14 10 23Q13 13 5 0z" fill="#ff6534"/></svg>
      <div class="logo"><span>野火</span>论坛</div>
      <a href="#">www.proewildfire.cn</a>
    </div>
  </section>
</main>
</div>
</body>
</html>
```
FILE: styles.css
```css
* { box-sizing: border-box; }
body { margin: 0; background: #e2e2e2; color: #333; font: 12px/16px "Noto Sans CJK SC", sans-serif; overflow: hidden; }
button { border: 0; padding: 0; background: none; font: inherit; color: inherit; white-space: nowrap; }
h1, h2, ul { margin: 0; padding: 0; font-weight: 400; list-style: none; }
svg { flex: none; overflow: visible; display: block; }
.defs { position: absolute; width: 0; height: 0; }
.i10 { width: 10px; height: 10px; }
.i14 { width: 14px; height: 14px; }
.i16 { width: 16px; height: 16px; }
.i18 { width: 18px; height: 18px; }
.i20 { width: 20px; height: 20px; }
.i32 { width: 32px; height: 32px; }
.caret { flex: none; width: 8px; border: 4px solid transparent; border-top-color: #5a5a5a; border-bottom: 0; }
.pale { border-top-color: #a8a8a8; }
.dark { border-top-color: #222; border-top-width: 5px; }

.app { height: 100vh; display: flex; flex-direction: column; border-left: 4px solid #a2a2a2; }

.titlebar { height: 21px; display: flex; flex: none; overflow: hidden; }
.quick { display: flex; align-items: center; gap: 8px; height: 16px; margin-top: -4px; padding-left: 12px; }
.quick .caret { margin: 0 -1px; }
.quick .vr { width: 1px; height: 20px; margin: 0 3px; background: #aaa; }
.quick .end { margin: 0 -2px; }
.quick .new { margin-left: -4px; }
.titlebar h1 { flex: 1; margin-top: -7px; padding-right: 13px; text-align: center; font: 14px/20px "Noto Sans", "Noto Sans CJK SC", sans-serif; color: #222; }

.tabs { display: flex; flex: none; height: 26px; align-items: stretch; gap: 1px; font-size: 15px; line-height: 24px; }
.tabs button { width: 70px; margin-top: 1px; padding-bottom: 2px; background: #cbcfd1; color: #444; }
.tabs .wide { width: 100px; }
.tabs .file { width: 80px; margin: 0 -1px 0 0; background: #666; color: #fff; }
.tabs .on { width: 71px; margin: 0 -1px 0 0; background: #f8f8f8; border-top: 1px solid #999; color: #222; }
.tabs .rule { flex: 1; border-bottom: 1px solid #bbb; }

.ribbon { display: flex; flex: none; border-bottom: 2px solid #a0a0a0; background: #f8f8f8; }
.group { display: flex; flex-direction: column; width: 129px; border-right: 1px solid #b8babc; }
.g2 { width: 107px; } .g3 { width: 190px; } .g4 { width: 151px; } .g5 { width: 82px; } .g6 { width: 58px; } .g7 { width: 319px; } .g8 { width: 235px; } .g9 { width: 119px; }
.rest { flex: 1; }
.body { display: flex; height: 87px; }
.pad7 { padding-left: 6px; }
.pad18 { padding-left: 17px; }
.foot { display: flex; align-items: center; justify-content: center; gap: 2px; height: 25px; padding-bottom: 2px; background: #edeff1; }
.big { display: flex; flex-direction: column; align-items: center; padding-top: 6px; }
.big span { margin-top: 9px; white-space: normal; max-width: 48px; }
.big .caret { margin-top: 7px; }
.w34 { width: 34px; } .w44 { width: 44px; } .w46 { width: 46px; } .w50 { width: 50px; } .w56 { width: 56px; } .w62 { width: 62px; } .w64 { width: 64px; }
.col { display: grid; grid-template-rows: repeat(3, 28px); padding-left: 1px; }
.col.w58 { width: 58px; }
.col.w73 { width: 73px; }
.col.line { width: 79px; margin-right: 1px; background: linear-gradient(#dcdcdc, #dcdcdc) right 9px / 1px 68px no-repeat; }
.small { display: flex; align-items: center; gap: 4px; }
.small .caret { margin-left: 2px; }
.off { color: #a6a6a6; }
.off .caret { border-top-color: #a6a6a6; }

.work { flex: 1; display: flex; min-height: 0; }
.side { width: 392px; flex: none; display: flex; flex-direction: column; border-right: 1px solid #a5a5a5; background: #edeff1; }
.sidetabs { display: flex; height: 29px; flex: none; padding-right: 2px; }
.sidetabs button { display: flex; align-items: center; justify-content: center; gap: 4px; padding-bottom: 2px; border: 1px solid #a5a5a5; border-left: 0; background: #d8dcdc; color: #777; }
.sidetabs .on { width: 76px; border-color: transparent #a5a5a5 transparent transparent; background: #edeff1; color: #333; }
.sidetabs .mid { width: 112px; }
.sidetabs .fav { width: 76px; gap: 6px; }
.sidetabs .fill { flex: 1; background: #cecfd0; border-top: 1px solid #a5a5a5; }
.panel { flex: 1; display: flex; flex-direction: column; padding: 0 7px 0 8px; }
.treehead { height: 28px; display: flex; align-items: center; gap: 11px; padding: 0 4px 2px 20px; }
.treehead h2 { flex: 1; font-size: 12px; }
.tool { display: flex; align-items: center; gap: 6px; }
.search { height: 25px; display: flex; align-items: center; gap: 10px; padding: 0 4px; }
.box { flex: 1; height: 25px; display: flex; align-items: center; padding-right: 4px; border: 1px solid #c2c6c9; background: #fff; margin-right: -5px; }
.box input { flex: 1; min-width: 0; border: 0; outline: 0; background: none; font: inherit; }
.tree { flex: 1; display: grid; grid-template-columns: 1fr 61px; margin-top: 4px; border-top: 1px solid #ccd0d2; background: #fdfdfd; }
.rep { border-left: 1px solid #dadcde; }
.colhead { height: 23px; display: flex; align-items: center; gap: 1px; padding-left: 7px; border-bottom: 1px solid #d4d6d8; white-space: nowrap; color: #222; }
.tree li { height: 24px; display: flex; align-items: center; gap: 4px; padding: 0 0 2px 5px; white-space: nowrap; font: 13px/22px "Noto Sans", "Noto Sans CJK SC", sans-serif; color: #444; }
.tree .deep { padding-left: 45px; }
.twist { width: 10px; margin: 0 2px 0 4px; border: 5px solid transparent; border-top: 7px solid #777; border-bottom: 0; }

.canvas { flex: 1; position: relative; overflow: hidden; background: #e9eaee; }
.model { width: 1141px; height: 668px; }
.edges path, .edges ellipse { stroke: #141210; stroke-width: 1; shape-rendering: crispEdges; }
.edges [stroke="none"] { stroke: none; }
.edges .top { fill: #dcbb73; }
.edges .lite { fill: #d9b970; }
.edges .mid { fill: #bda062; }
.edges .wall { fill: #9e8854; }
.edges .ln { fill: none; }
.edges .heavy { stroke-width: 2; }

.viewbar { position: absolute; left: 487px; top: 6px; width: 453px; height: 32px; padding: 0 3px; display: flex; align-items: center; justify-content: space-between; border: 1px solid #a0a0a0; background: #f9f9f9; }
.viewbar button { position: relative; width: 24px; height: 24px; display: flex; align-items: center; justify-content: center; }
.viewbar .down { border: 1px solid #aaa; background: #dfe1e3; }
.viewbar .more::after { content: ""; position: absolute; right: 1px; bottom: 2px; border: 2px solid #555; border-top-color: transparent; border-left-color: transparent; }

.brand { position: absolute; right: 20px; bottom: 8px; display: flex; flex-direction: column; align-items: flex-end; }
.logo { font-size: 41px; line-height: 46px; font-style: italic; color: #000; white-space: nowrap; }
.logo span { color: #ff6534; }
.brand a { padding-right: 3px; font: italic 16px/16px "DejaVu Sans", sans-serif; color: #999; text-decoration: none; }
.flame { position: absolute; left: 66px; top: -14px; width: 18px; height: 42px; }
```
